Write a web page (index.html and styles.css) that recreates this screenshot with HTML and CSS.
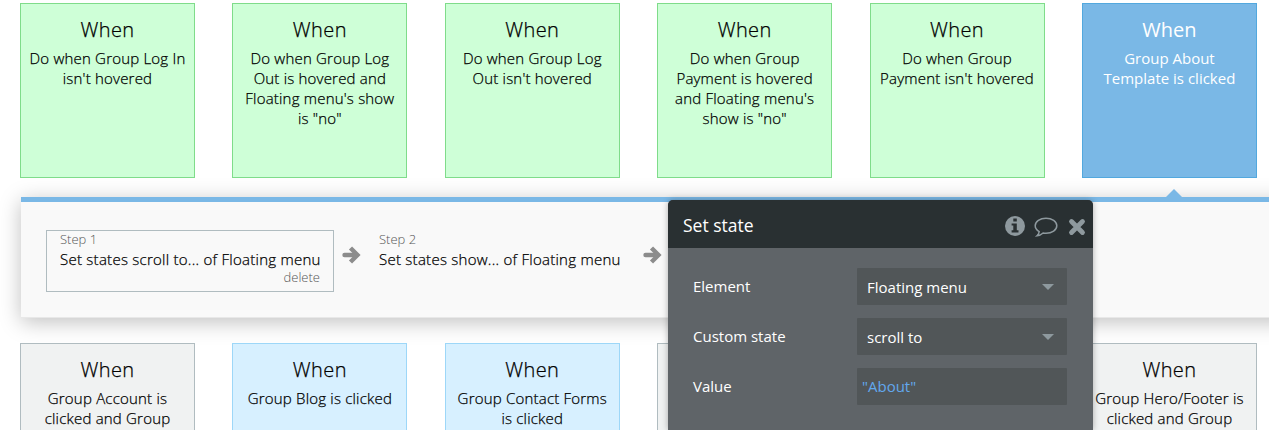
FILE: index.html
```
<!DOCTYPE html>
<html lang="en">
<head>
    <meta charset="utf-8">
    <title>Workflow</title>
    <link rel="stylesheet" href="styles.css">
</head>
<body>
    <main class="workflow">
        <section class="events">
            <article class="event green">
                <h2>When</h2>
                <p>Do when Group Log In isn't hovered</p>
            </article>
            <article class="event green">
                <h2>When</h2>
                <p>Do when Group Log Out is hovered and Floating menu's show is "no"</p>
            </article>
            <article class="event green">
                <h2>When</h2>
                <p>Do when Group Log Out isn't hovered</p>
            </article>
            <article class="event green">
                <h2>When</h2>
                <p>Do when Group Payment is hovered and Floating menu's show is "no"</p>
            </article>
            <article class="event green">
                <h2>When</h2>
                <p>Do when Group Payment isn't hovered</p>
            </article>
            <article class="event selected">
                <h2>When</h2>
                <p>Group About Template is clicked</p>
            </article>
        </section>

        <section class="actions">
            <div class="step active">
                <span class="number">Step 1</span>
                <span class="title">Set states scroll to... of Floating menu</span>
                <span class="delete">delete</span>
            </div>
            <svg class="arrow" viewBox="0 0 17 18"><path d="M1.5 9H13" stroke-linecap="round"/><path d="M7.500 2L14.500 9L7.500 16"/></svg>
            <div class="step">
                <span class="number">Step 2</span>
                <span class="title">Set states show... of Floating menu</span>
            </div>
            <svg class="arrow" viewBox="0 0 17 18"><path d="M1.5 9H13" stroke-linecap="round"/><path d="M7.500 2L14.500 9L7.500 16"/></svg>
        </section>

        <section class="events">
            <article class="event gray">
                <h2>When</h2>
                <p>Group Account is clicked and Group</p>
            </article>
            <article class="event blue">
                <h2>When</h2>
                <p>Group Blog is clicked</p>
            </article>
            <article class="event blue">
                <h2>When</h2>
                <p>Group Contact Forms is clicked</p>
            </article>
            <article class="event gray"></article>
            <article class="event gray"></article>
            <article class="event gray">
                <h2>When</h2>
                <p>Group Hero/Footer is clicked and Group</p>
            </article>
        </section>
    </main>

    <!-- property editor, floats over the workflow -->
    <aside class="editor">
        <header class="editor-head">
            <h3>Set state</h3>
            <svg class="icon-info" viewBox="0 0 20 20">
                <circle cx="10" cy="10" r="10"/>
                <path class="cut" d="M8.3 2.600h3.500v3H8.300zM6.600 7.400h5.200v6.800h1.700v2.300H6.600v-2.300h1.700V9.600H6.600z"/>
            </svg>
            <svg class="icon-comment" viewBox="0 0 24 20">
                <path d="M12 1.300c6 0 10.800 3.300 10.800 7.500s-4.800 7.500-10.800 7.500c-1 0-2-.1-2.900-.3-1.700 1.600-3.700 2.500-6.100 2.800 1.300-1.200 2-2.500 2.200-4.200C2.700 13.200 1.200 11.200 1.200 8.800 1.200 4.600 6 1.300 12 1.300z"/>
            </svg>
            <svg class="icon-close" viewBox="0 0 16 16"><path d="M2.500 2.500L13.500 13.500M13.500 2.500L2.500 13.500"/></svg>
        </header>
        <div class="fields">
            <span class="label">Element</span>
            <div class="select">Floating menu</div>
            <span class="label">Custom state</span>
            <div class="select">scroll to</div>
            <span class="label">Value</span>
            <div class="expression">"About"</div>
        </div>
    </aside>
</body>
</html>
```
FILE: styles.css
```
* { box-sizing: border-box; margin: 0; padding: 0; }

body {
    background: #fff;
    color: #000;
    font-family: "Open Sans", sans-serif;
    font-size: 15px;
}

.workflow {
    height: 430px;
    padding-top: 3px;
    overflow: hidden;
}

/* events */
.events {
    display: grid;
    grid-template-columns: repeat(6, 175px);
    column-gap: 37.4px;
    padding-left: 20px;
}
.event {
    position: relative;
    height: 175px;
    padding: 12px 8px 0;
    border: 1px solid;
    text-align: center;
    font-weight: 300;
    letter-spacing: .2px;
    -webkit-text-stroke: .25px;
}
.event h2 {
    font-size: 20px;
    font-weight: 300;
    line-height: 28px;
    letter-spacing: .4px;
}
.event p {
    margin: 4px -1px 0;
    line-height: 20px;
}
.green { background: #ceffd7; border-color: #7fdc8a; }
.blue { background: #d7f0ff; border-color: #9dd7f8; }
.gray { background: #f0f2f2; border-color: #b0bcc0; }
.gray h2, .blue h2 { line-height: 27px; margin-bottom: 5px; }
.selected {
    background: #7ab8e6;
    border-color: #52a8de;
    color: #fff;
    font-weight: 400;
    letter-spacing: 0;
    -webkit-text-stroke: 0;
}
.selected h2 { font-weight: 400; letter-spacing: 0; }
.selected p { margin: 4px 4px 0; }
/* pointer that links the event to its actions */
.selected::after {
    content: "";
    position: absolute;
    z-index: 1;
    left: 83px;
    bottom: -20px;
    border: 8px solid transparent;
    border-top: 0;
    border-bottom-color: #7ab8e6;
}

/* actions */
.actions {
    display: flex;
    align-items: flex-start;
    height: 121px;
    margin: 19px -60px 25px 21px;
    padding: 28px 0 0 25px;
    border-top: 5px solid #7ab8e6;
    border-bottom: 1px solid #e8e8e8;
    background: #f9f9f9;
    box-shadow: 0 4px 20px rgba(0, 0, 0, .25);
}
.step {
    display: flex;
    flex-direction: column;
    flex-shrink: 0;
    width: 270px;
    height: 62px;
    padding: 0 13px;
    border: 1px solid transparent;
    font-weight: 300;
    letter-spacing: .26px;
    white-space: nowrap;
}
.active {
    width: 288px;
    border-color: #b0bcc0;
}
.number {
    margin-top: -1px;
    color: #555;
    font-size: 13px;
    line-height: 18px;
    letter-spacing: 0;
}
.title {
    line-height: 22px;
    -webkit-text-stroke: .25px;
}
.delete {
    align-self: flex-end;
    color: #555;
    font-size: 13px;
    line-height: 15px;
    letter-spacing: 0;
}
.arrow {
    flex-shrink: 0;
    width: 17px;
    height: 18px;
    margin: 16px 5px 0 9px;
    overflow: visible;
    fill: none;
    stroke: #8c8c8c;
    stroke-width: 4.4;
}

/* editor */
.editor {
    position: absolute;
    left: 668px;
    top: 200px;
    width: 425px;
    height: 230px;
    border-radius: 5px 5px 0 0;
    background: #5f6468;
    box-shadow: 0 0 6px rgba(0, 0, 0, .3);
    color: #fff;
    overflow: hidden;
}
.editor-head {
    display: flex;
    align-items: center;
    height: 48px;
    padding: 4px 8px 0 15px;
    background: #293032;
}
.editor-head h3 {
    flex: 1;
    margin-top: -2px;
    font-size: 17.5px;
    font-weight: 400;
}
.editor-head svg {
    fill: none;
    stroke: #8e999e;
}
.editor-head .icon-info {
    width: 20px;
    height: 20px;
    fill: #8e999e;
    stroke: none;
}
.icon-info .cut { fill: #293032; }
.icon-comment {
    width: 24px;
    height: 20px;
    margin: 2px 11px 0 9px;
    stroke-width: 1.5;
}
.editor-head .icon-close {
    width: 16px;
    height: 16px;
    margin-top: 1px;
    overflow: visible;
    stroke-width: 4.8;
    stroke-linecap: round;
}
.fields {
    display: grid;
    grid-template-columns: 164px 210px;
    grid-auto-rows: 37px;
    row-gap: 13px;
    padding: 20px 25px;
    line-height: 37px;
}
.select, .expression {
    border-radius: 1px;
    background: #515658;
}
.select {
    display: flex;
    align-items: center;
    justify-content: space-between;
    padding: 1px 13px 0 10px;
}
.select::after {
    content: "";
    border: 6px solid transparent;
    border-top-color: #8e999e;
    border-bottom: 0;
}
.expression {
    padding-left: 5px;
    color: #62a8ed;
}
```
